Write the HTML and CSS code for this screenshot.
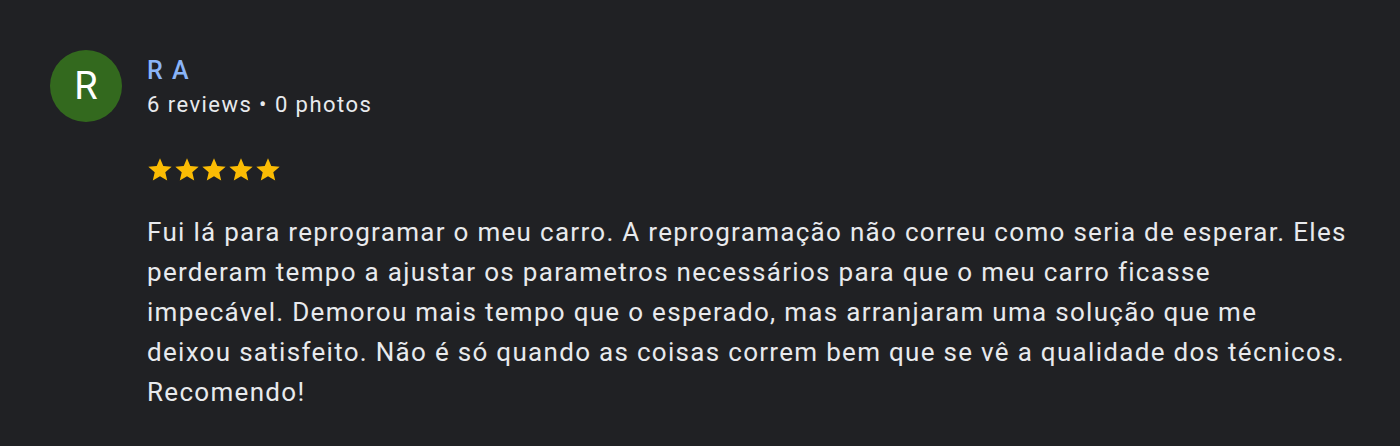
FILE: index.html
```html
<!DOCTYPE html>
<html lang="pt">
<head>
    <meta charset="UTF-8">
    <title>Review</title>
    <link rel="stylesheet" href="styles.css">
</head>
<body>
    <div class="review">
        <div class="header">
            <div class="avatar">R</div>
            <div class="author">
                <div class="name">R A</div>
                <div class="meta">6 reviews • 0 photos</div>
            </div>
        </div>
        <div class="body">
            <div class="stars">
                <svg viewBox="0 0 24 24"><path d="M12 17.27L18.18 21l-1.64-7.03L22 9.24l-7.19-.61L12 2 9.19 8.63 2 9.24l5.46 4.73L5.82 21z"/></svg>
                <svg viewBox="0 0 24 24"><path d="M12 17.27L18.18 21l-1.64-7.03L22 9.24l-7.19-.61L12 2 9.19 8.63 2 9.24l5.46 4.73L5.82 21z"/></svg>
                <svg viewBox="0 0 24 24"><path d="M12 17.27L18.18 21l-1.64-7.03L22 9.24l-7.19-.61L12 2 9.19 8.63 2 9.24l5.46 4.73L5.82 21z"/></svg>
                <svg viewBox="0 0 24 24"><path d="M12 17.27L18.18 21l-1.64-7.03L22 9.24l-7.19-.61L12 2 9.19 8.63 2 9.24l5.46 4.73L5.82 21z"/></svg>
                <svg viewBox="0 0 24 24"><path d="M12 17.27L18.18 21l-1.64-7.03L22 9.24l-7.19-.61L12 2 9.19 8.63 2 9.24l5.46 4.73L5.82 21z"/></svg>
            </div>
            <p class="text">Fui lá para reprogramar o meu carro. A reprogramação não correu como seria de esperar. Eles<br>perderam tempo a ajustar os parametros necessários para que o meu carro ficasse<br>impecável. Demorou mais tempo que o esperado, mas arranjaram uma solução que me<br>deixou satisfeito. Não é só quando as coisas correm bem que se vê a qualidade dos técnicos.<br>Recomendo!</p>
        </div>
    </div>
</body>
</html>
```

FILE: styles.css
```css
body {
    margin: 0;
    background: #202124;
    color: #e8eaed;
    font-family: Roboto, Arial, sans-serif;
}
.review {
    padding: 50px 0 0 50px;
}
.header {
    display: flex;
    align-items: flex-start;
}
.avatar {
    width: 72px;
    height: 72px;
    border-radius: 50%;
    background: #33691e;
    color: white;
    font-size: 38px;
    display: flex;
    align-items: center;
    justify-content: center;
    flex-shrink: 0;
}
.author {
    margin-left: 25px;
    padding-top: 7px;
}
.name {
    color: #8ab4f8;
    font-size: 25px;
    font-weight: 500;
    line-height: 28px;
    letter-spacing: 1.5px;
}
.meta {
    font-size: 22px;
    line-height: 28px;
    margin-top: 6px;
    letter-spacing: 1.45px;
}
.body {
    margin-left: 97px;
}
.stars {
    display: flex;
    margin-top: 34px;
    height: 28px;
}
.stars svg {
    width: 28px;
    height: 28px;
    fill: #fbbc04;
    margin-left: -1px;
}
.text {
    font-size: 26px;
    line-height: 40px;
    letter-spacing: 1.3px;
    white-space: nowrap;
    margin: 28px 0 0;
}
```
